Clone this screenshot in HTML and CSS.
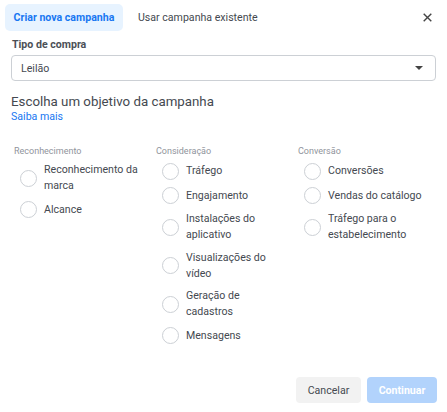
FILE: index.html
```html
<!DOCTYPE html>
<html lang="pt-BR">
<head>
<meta charset="utf-8">
<title>Criar nova campanha</title>
<link rel="stylesheet" href="styles.css">
</head>
<body>
<div class="dialog">
  <div class="tabs">
    <div class="tab tab-active">Criar nova campanha</div>
    <div class="tab">Usar campanha existente</div>
    <button class="close" aria-label="Fechar">
      <svg width="9" height="9" viewBox="0 0 9 9"><path d="M0.7 0.7 L8.3 8.3 M8.3 0.7 L0.7 8.3" stroke="#444" stroke-width="1.4" fill="none"/></svg>
    </button>
  </div>

  <div class="field">
    <div class="field-label">Tipo de compra</div>
    <div class="select">
      <span>Leilão</span>
      <svg class="caret" width="8" height="4" viewBox="0 0 8 4"><path d="M0 0 H8 L4 4 Z" fill="#444"/></svg>
    </div>
  </div>

  <div class="intro">
    <div class="title">Escolha um objetivo da campanha</div>
    <a class="link" href="#">Saiba mais</a>
  </div>

  <div class="objectives">
    <div class="column">
      <div class="cat">Reconhecimento</div>
      <div class="options">
        <div class="option"><span class="radio"></span><span class="opt-text">Reconhecimento da marca</span></div>
        <div class="option"><span class="radio"></span><span class="opt-text">Alcance</span></div>
      </div>
    </div>
    <div class="column">
      <div class="cat">Consideração</div>
      <div class="options">
        <div class="option"><span class="radio"></span><span class="opt-text">Tráfego</span></div>
        <div class="option"><span class="radio"></span><span class="opt-text">Engajamento</span></div>
        <div class="option"><span class="radio"></span><span class="opt-text">Instalações do aplicativo</span></div>
        <div class="option"><span class="radio"></span><span class="opt-text">Visualizações do vídeo</span></div>
        <div class="option"><span class="radio"></span><span class="opt-text">Geração de cadastros</span></div>
        <div class="option"><span class="radio"></span><span class="opt-text">Mensagens</span></div>
      </div>
    </div>
    <div class="column">
      <div class="cat">Conversão</div>
      <div class="options">
        <div class="option"><span class="radio"></span><span class="opt-text">Conversões</span></div>
        <div class="option"><span class="radio"></span><span class="opt-text">Vendas do catálogo</span></div>
        <div class="option"><span class="radio"></span><span class="opt-text">Tráfego para o estabelecimento</span></div>
      </div>
    </div>
  </div>

  <div class="footer">
    <button class="btn btn-secondary">Cancelar</button>
    <button class="btn btn-primary" disabled>Continuar</button>
  </div>
</div>
</body>
</html>
```

FILE: styles.css
```css
* { box-sizing: border-box; }

html, body {
  margin: 0;
  padding: 0;
  background: #ffffff;
}

body {
  font-family: Roboto, "Liberation Sans", Arial, sans-serif;
  color: #444950;
}

.dialog {
  width: 447px;
  height: 412px;
  display: flex;
  flex-direction: column;
}

.tabs {
  display: flex;
  align-items: center;
  gap: 6px;
  padding: 4px 10px 0 5px;
}

.tab {
  height: 27px;
  line-height: 27px;
  padding: 0 9px;
  font-size: 10.6px;
  color: #444950;
  border-radius: 5px;
}

.tab-active {
  width: 118px;
  text-align: center;
  padding: 0;
  background: #e7f3ff;
  color: #1877f2;
  font-weight: 700;
}

.close {
  margin-left: auto;
  width: 20px;
  height: 27px;
  padding: 0;
  border: 0;
  background: transparent;
  display: flex;
  align-items: center;
  justify-content: center;
}

.field {
  padding: 7px 11px 0 11px;
}

.field-label {
  font-size: 10.6px;
  line-height: 14px;
  font-weight: 700;
  color: #4b4f56;
  padding-left: 1px;
  margin-bottom: 3px;
}

.select {
  height: 26px;
  border: 1px solid #ccd0d5;
  border-radius: 4px;
  display: flex;
  align-items: center;
  justify-content: space-between;
  padding: 0 12px 0 9px;
  font-size: 10.6px;
  color: #444950;
}

.intro {
  padding: 13px 11px 0 11px;
  display: flex;
  flex-direction: column;
}

.title {
  font-size: 13.3px;
  line-height: 16px;
  color: #444950;
}

.link {
  font-size: 10.6px;
  line-height: 14px;
  color: #1877f2;
  text-decoration: none;
}

.objectives {
  display: grid;
  grid-template-columns: 142px 142px 142px;
  padding: 21px 0 0 14px;
}

.cat {
  font-size: 9px;
  line-height: 12px;
  color: #90949c;
  margin-bottom: 5px;
}

.options {
  display: flex;
  flex-direction: column;
  gap: 6.5px;
  padding-left: 6px;
}

.option {
  display: flex;
  align-items: center;
  gap: 7px;
  min-height: 18px;
}

.radio {
  flex: none;
  width: 17px;
  height: 17px;
  border-radius: 50%;
  border: 1px solid #ccd0d5;
  background: #ffffff;
}

.opt-text {
  width: 95px;
  font-size: 10.6px;
  line-height: 16px;
  color: #444950;
}

.footer {
  margin-top: auto;
  display: flex;
  justify-content: flex-end;
  gap: 6px;
  padding: 0 10px 9px 0;
}

.btn {
  height: 26px;
  border: 0;
  border-radius: 4px;
  font-family: inherit;
  font-size: 10.6px;
  padding: 0;
}

.btn-secondary {
  width: 65px;
  background: #f2f2f2;
  color: #444950;
}

.btn-primary {
  width: 70px;
  background: #b2d3fc;
  color: #ffffff;
  font-weight: 700;
}
```
